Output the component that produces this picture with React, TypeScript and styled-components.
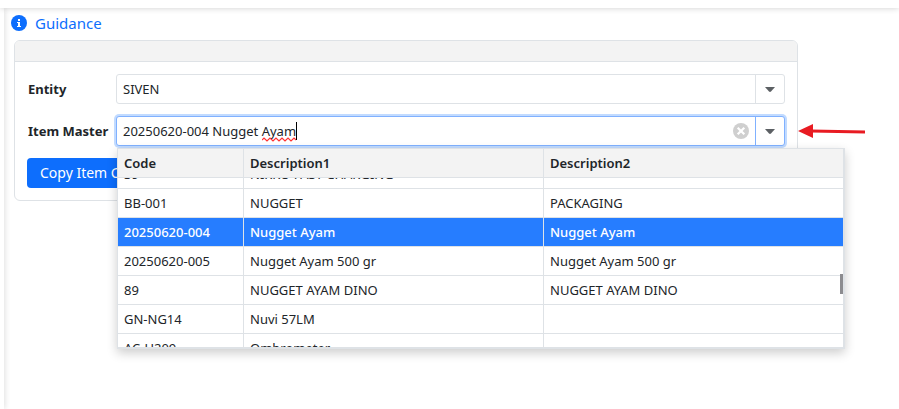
import React, { useLayoutEffect, useRef } from "react";
import styled, { createGlobalStyle, css } from "styled-components";

const line = "#dee2e6";
const focusLine = "#80b1ff";

const GlobalStyle = createGlobalStyle`
  *, *::before, *::after { box-sizing: border-box; }
  body {
    margin: 0;
    background: #fff;
    color: #212529;
    font: 13px/20px "Noto Sans", sans-serif;
  }
  button, input { font: inherit; color: inherit; }
`;

const Page = styled.div`
  display: flex;
  flex-direction: column;
  min-height: 100vh;
  overflow: hidden;
`;

const TopBar = styled.header`
  position: relative;
  z-index: 1;
  height: 8px;
  background: #fff;
  box-shadow: 0 0 6px rgba(0, 0, 0, 0.2);
`;

const Columns = styled.div`
  display: flex;
  flex: 1;
`;

const SideBar = styled.nav`
  width: 4px;
  background: #fff;
  box-shadow: 0 0 6px rgba(0, 0, 0, 0.2);
`;

const Main = styled.main`
  flex: 1;
  min-width: 0;
  padding: 4px 101px 0 10px;
`;

const GuidanceLink = styled.a`
  display: flex;
  width: max-content;
  align-items: center;
  gap: 8px;
  height: 22px;
  margin: 0 0 6px -3px;
  color: #0d6efd;
  font-size: 15px;
  text-decoration: none;
`;

const Card = styled.section`
  border: 1px solid ${line};
  border-radius: 6px;
`;

const CardHeader = styled.div`
  height: 21px;
  border-bottom: 1px solid ${line};
  border-radius: 5px 5px 0 0;
  background: #f3f3f3;
`;

const Form = styled.form`
  display: flex;
  flex-direction: column;
  gap: 12px;
  padding: 12px;
`;

const Field = styled.div`
  display: grid;
  grid-template-columns: 89px 1fr;
  align-items: center;
`;

const Label = styled.label`
  padding-left: 1px;
  font-weight: 700;
  white-space: nowrap;
`;

const Combo = styled.div<{ $focused?: boolean }>`
  position: relative;
  display: flex;
  height: 30px;
  border: 1px solid ${(p) => (p.$focused ? focusLine : line)};
  border-radius: 3px;
  background: #fff;
  ${(p) => p.$focused && css`box-shadow: 0 0 0 2px #c2dbff;`}
`;

const ComboInput = styled.input`
  flex: 1;
  min-width: 0;
  padding: 0 6px;
  border: 0;
  border-radius: 3px;
  outline: 0;
  background: transparent;
`;

const IconButton = styled.button<{ $divider?: string }>`
  display: grid;
  place-items: center;
  width: 29px;
  padding: 0;
  border: 0;
  border-left: ${(p) => (p.$divider ? `1px solid ${p.$divider}` : 0)};
  background: transparent;
`;

const SpellMark = styled.svg`
  position: absolute;
  left: 145px;
  top: 4px;
`;

const Pointer = styled.svg`
  position: absolute;
  left: 100%;
  top: 6px;
  margin-left: 14px;
`;

const SubmitButton = styled.button`
  align-self: flex-start;
  height: 30px;
  padding: 0 13px;
  border: 0;
  border-radius: 4px;
  background: #0d6efd;
  color: #fff;
  font-size: 14px;
`;

const Popup = styled.div`
  position: absolute;
  z-index: 2;
  top: 31px;
  left: 0;
  right: -61px;
  border: 2px solid ${line};
  border-top-width: 1px;
  border-left-width: 1px;
  background: #fff;
  box-shadow: 0 4px 10px rgba(0, 0, 0, 0.2);
`;

const Scroller = styled.div`
  height: 198px;
  overflow: hidden;
`;

const Grid = styled.table`
  width: 100%;
  table-layout: fixed;
  border-collapse: separate;
  border-spacing: 0;
  text-align: left;
`;

const HeadCell = styled.th`
  position: sticky;
  top: 0;
  height: 29px;
  padding: 0 6px;
  border-bottom: 1px solid ${line};
  background: #f3f3f3;
  font-weight: 600;
  & + & { border-left: 1px solid ${line}; }
  &:first-child { width: 125px; }
`;

const Row = styled.tr<{ $selected?: boolean }>`
  ${(p) => p.$selected && css`
    background: #267dff;
    color: #fff;
    font-weight: 500;
  `}
`;

const Cell = styled.td`
  height: 29px;
  padding: 0 6px;
  border-bottom: 1px solid ${line};
  white-space: nowrap;
  & + & { border-left: 1px solid ${line}; }
`;

const Thumb = styled.div`
  position: absolute;
  top: 125px;
  right: 0;
  width: 3px;
  height: 20px;
  background: #8c8c90;
`;

const items = [
  ["39", "NIKKO FAST CHARGING", ""],
  ["BB-001", "NUGGET", "PACKAGING"],
  ["20250620-004", "Nugget Ayam", "Nugget Ayam"],
  ["20250620-005", "Nugget Ayam 500 gr", "Nugget Ayam 500 gr"],
  ["89", "NUGGET AYAM DINO", "NUGGET AYAM DINO"],
  ["GN-NG14", "Nuvi 57LM", ""],
  ["AC-U209", "Ombrometer", ""],
];
const selectedCode = "20250620-004";

const InfoIcon = () => (
  <svg width="16" height="16" viewBox="0 0 16 16" aria-hidden="true">
    <circle cx="8" cy="8" r="8" fill="#0d6efd" />
    <path d="M7 4h2v2H7zM6 7h3v4h1v1H6v-1h1V8H6z" fill="#fff" />
  </svg>
);

const Chevron = () => (
  <svg width="10" height="5" viewBox="0 0 10 5" aria-hidden="true">
    <path d="M0 0h10L6 4.6Q5 5.4 4 4.6z" fill="#5c6064" />
  </svg>
);

const ClearIcon = () => (
  <svg width="16" height="16" viewBox="0 0 16 16" aria-hidden="true">
    <circle cx="8" cy="8" r="8" fill="#cfcfcf" />
    <path d="M4.7 4.7l6.6 6.6M11.3 4.7l-6.6 6.6" stroke="#fff" strokeWidth="2.2" />
  </svg>
);

function ItemPopup() {
  const scroller = useRef<HTMLDivElement>(null);
  useLayoutEffect(() => {
    if (scroller.current) scroller.current.scrollTop = 18;
  }, []);
  return (
    <Popup>
      <Scroller ref={scroller}>
        <Grid aria-label="Item Master">
          <thead>
            <tr>
              <HeadCell>Code</HeadCell>
              <HeadCell>Description1</HeadCell>
              <HeadCell>Description2</HeadCell>
            </tr>
          </thead>
          <tbody>
            {items.map((item) => (
              <Row key={item[0]} $selected={item[0] === selectedCode}>
                {item.map((text, i) => <Cell key={i}>{text}</Cell>)}
              </Row>
            ))}
          </tbody>
        </Grid>
      </Scroller>
      <Thumb />
    </Popup>
  );
}

export default function App() {
  return (
    <>
      <GlobalStyle />
      <Page>
        <TopBar />
        <Columns>
          <SideBar />
          <Main>
            <GuidanceLink href="#guidance"><InfoIcon />Guidance</GuidanceLink>
            <Card>
              <CardHeader />
              <Form>
                <Field>
                  <Label htmlFor="entity">Entity</Label>
                  <Combo>
                    <ComboInput id="entity" defaultValue="SIVEN" />
                    <IconButton type="button" $divider={line} aria-label="Open entity list"><Chevron /></IconButton>
                  </Combo>
                </Field>
                <Field>
                  <Label htmlFor="item">Item Master</Label>
                  <Combo $focused>
                    <ComboInput id="item" defaultValue="20250620-004 Nugget Ayam" spellCheck={false} />
                    <SpellMark width="36" height="22" viewBox="0 0 36 22" aria-hidden="true">
                      <path d="M0 19l2-2 3 3 3-3 3 3 3-3 3 3 3-3 3 3 3-3 3 3 3-3 2 2" fill="none" stroke="#f33" strokeWidth="1.2" />
                      <path d="M34.5 1v18" stroke="#000" />
                    </SpellMark>
                    <IconButton type="button" aria-label="Clear item"><ClearIcon /></IconButton>
                    <IconButton type="button" $divider={focusLine} aria-label="Open item list"><Chevron /></IconButton>
                    <Pointer width="68" height="16" viewBox="0 0 68 16" aria-hidden="true">
                      <path d="M13 8L67 9" stroke="#e81b22" strokeWidth="3" />
                      <path d="M0 8L15 1v14z" fill="#e81b22" />
                    </Pointer>
                    <ItemPopup />
                  </Combo>
                </Field>
                <SubmitButton type="button">Copy Item Code</SubmitButton>
              </Form>
            </Card>
          </Main>
        </Columns>
      </Page>
    </>
  );
}
